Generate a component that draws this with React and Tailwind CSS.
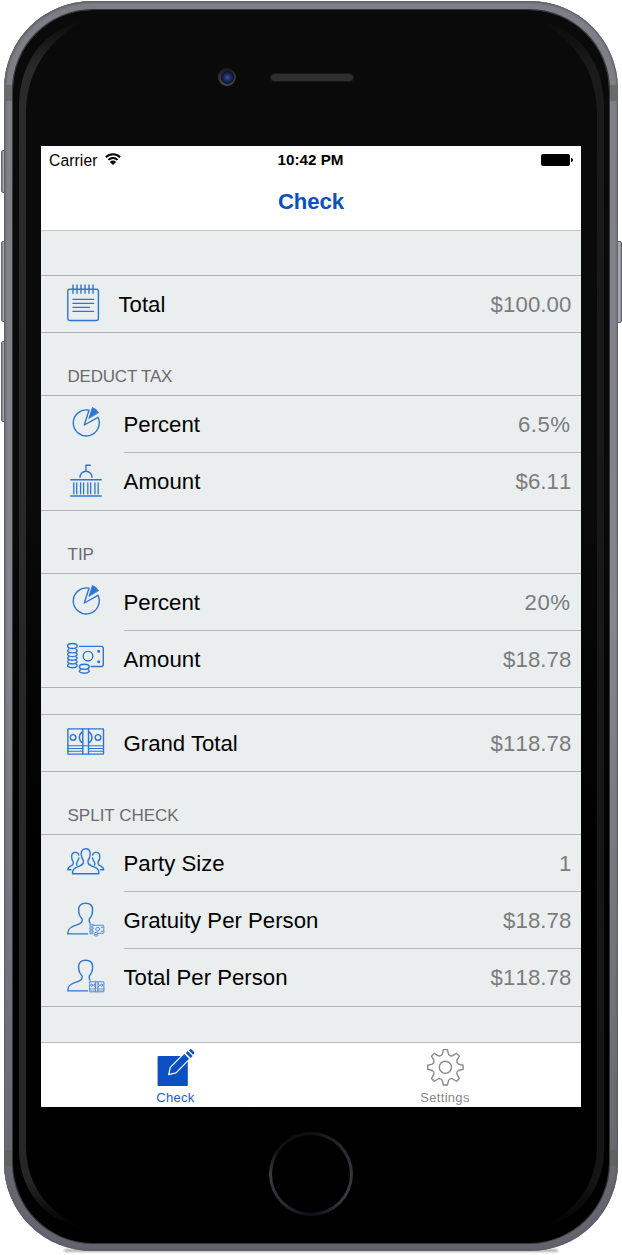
import React from "react";

const line = {
  fill: "none",
  stroke: "currentColor",
  strokeWidth: 1.4,
  strokeLinecap: "round",
  strokeLinejoin: "round",
};

function RowIcon({ children }) {
  return (
    <svg viewBox="0 0 38 56" className="h-[56px] w-[38px] shrink-0 overflow-visible text-[#2f75d3]">
      <g {...line}>{children}</g>
    </svg>
  );
}

function NotepadIcon() {
  return (
    <RowIcon>
      <rect x="0.8" y="13.3" width="30.6" height="31.2" rx="2" />
      <path d="M6 8.9v8.4M10 8.9v8.4M14 8.9v8.4M18 8.9v8.4M22 8.9v8.4M26 8.9v8.4" />
      <path d="M6 23.4h20.6M6 27.4h20.6M6 31.4h16.5M6 35.4h20.6" />
    </RowIcon>
  );
}

function PieIcon() {
  return (
    <RowIcon>
      <path d="M17.3 29L22 14.2A13 13 0 1 0 31 21.3Z" />
      <path d="M21.9 22.2L25.4 11.5Q29.5 13 31.4 16.4Z" fill="currentColor" strokeWidth="0.8" />
    </RowIcon>
  );
}

function BankIcon() {
  return (
    <RowIcon>
      <path d="M13 24.2a6 6 0 0 1 12 0M19 18.2v-6h4.3" />
      <path d="M3.8 26.8h30.4M3.8 43h30.4" strokeWidth="1.5" />
      <path d="M6.8 29.8v11M9.7 29.8v11M13.6 29.8v11M16.6 29.8v11M20.8 29.8v11M23.7 29.8v11M27.9 29.8v11M31.2 29.8v11" strokeWidth="1.3" />
    </RowIcon>
  );
}

function CashDrawing() {
  return (
    <>
      <path d="M12.6 15.4H34.3a2 2 0 0 1 2 2V33.5a2 2 0 0 1-2 2H24.2" />
      <circle cx="21" cy="25.2" r="4.8" />
      <circle cx="31.7" cy="20.3" r="0.8" fill="currentColor" />
      <circle cx="31.7" cy="30.8" r="0.8" fill="currentColor" />
      <ellipse cx="5.4" cy="15" rx="4.7" ry="2.5" />
      <path d="M1.7 18.4c-2.4 1.4-.4 3.5 3.7 3.5s6.1-2.1 3.7-3.5M1.7 22.1c-2.4 1.4-.4 3.5 3.7 3.5s6.1-2.1 3.7-3.5M1.7 25.8c-2.4 1.4-.4 3.5 3.7 3.5s6.1-2.1 3.7-3.5M1.7 29.5c-2.4 1.4-.4 3.5 3.7 3.5s6.1-2.1 3.7-3.5M1.7 33.2c-2.4 1.4-.4 3.5 3.7 3.5s6.1-2.1 3.7-3.5" />
      <ellipse cx="17.3" cy="35.8" rx="4.9" ry="2.5" />
      <path d="M13.4 38.8c-2.4 1.4-.4 3.5 3.9 3.5s6.3-2.1 3.9-3.5" />
    </>
  );
}

function CashIcon() {
  return (
    <RowIcon>
      <CashDrawing />
    </RowIcon>
  );
}

function BillsDrawing() {
  return (
    <>
      <rect x="0.9" y="13.9" width="35.6" height="25.2" rx="0.3" />
      <path d="M15.8 13.9v25.2M21.5 13.9v25.2" />
      <circle cx="6.1" cy="22.4" r="2.8" />
      <circle cx="31" cy="22.4" r="2.8" />
      <path d="M15.2 17.2c-3.800 2.400-3.800 8.200 0 10.400M22.100 17.200c3.800 2.400 3.800 8.200 0 10.400" />
      <path d="M.9 30.800h35.600M.9 33.500h14.900M21.500 33.500h15M.9 36.300h14.900M21.500 36.300h15" strokeWidth="1.1" />
    </>
  );
}

function BillsIcon() {
  return (
    <RowIcon>
      <BillsDrawing />
    </RowIcon>
  );
}

function GroupIcon() {
  return (
    <RowIcon>
      <path d="M18.7 13.8c-3 0-4.5 2-4.5 5 0 3.3 1 5.2 2.2 6.7v1.6c0 2.4-1.6 3-4.8 4.3-3.6 1.4-6 2.6-6 5.6v1.7h26.2v-1.7c0-3-2.4-4.2-6-5.6-3.2-1.3-4.8-1.9-4.8-4.3v-1.6c1.2-1.5 2.2-3.4 2.2-6.7 0-3-1.5-5-4.5-5z" />
      <path d="M11.800 20c-.4-1.600-1.600-2.600-3.500-2.600-2.400 0-3.700 1.600-3.700 4.300 0 2.600.8 4 1.700 5.200v1.600c0 2.900-5.500 2-5.500 6.300h3.200M9.900 30.200c-.9-1.300-.2-2.300.3-3.400q1.500-1.600 1.600-3.800" />
      <path d="M25.600 20c.4-1.600 1.600-2.600 3.500-2.600 2.400 0 3.700 1.600 3.700 4.300 0 2.600-.8 4-1.700 5.200v1.600c0 2.900 5.500 2 5.500 6.300h-3.200M27.500 30.200c.9-1.300.2-2.300-.3-3.400q-1.500-1.600-1.600-3.800" />
    </RowIcon>
  );
}

function PersonOutline() {
  return (
    <path d="M20.500 41.900H.8c0-4.600 1.700-6.200 5.700-7.800 4.300-1.600 8.600-2 8.600-5.300v-1.800c-2.200-2.200-3.500-5.300-3.500-9.200 0-4 2.400-6.500 7-6.500s7 2.500 7 6.500c0 3.900-1.300 7-3.300 9.200v2.400l.6 1.600" />
  );
}

function PersonCashIcon() {
  return (
    <RowIcon>
      <PersonOutline />
      <g transform="translate(22.300 27.100) scale(0.4)" strokeWidth="2.400" opacity="0.85">
        <CashDrawing />
      </g>
    </RowIcon>
  );
}

function PersonBillsIcon() {
  return (
    <RowIcon>
      <PersonOutline />
      <g transform="translate(22.300 27.200) scale(0.4)" strokeWidth="2.400" opacity="0.85">
        <BillsDrawing />
      </g>
    </RowIcon>
  );
}

function Row({ icon, label, value, wide, last, short, labelClass = "" }) {
  const percent = value.endsWith("%");
  return (
    <div className={"flex overflow-visible pl-[26px] " + (short ? "h-[56px]" : "h-[57px]")}>
      {icon}
      <div
        className={
          "relative flex flex-1 items-center justify-between pt-0.5 text-[22.2px] leading-none " +
          (percent ? "pr-[10.5px] " : "pr-[9.5px] ") +
          (wide ? "ml-[13.5px] " : "ml-[18.5px] ")
        }
      >
        <span className={"whitespace-nowrap text-black " + labelClass}>{label}</span>
        <span className={"text-[#7a7c7d] [font-kerning:none] " + (percent ? "tracking-[0.5px]" : "tracking-[0.1px]")}>{value}</span>
        {!last && <i className="absolute inset-x-0 bottom-0 h-px bg-[#b4b7b8]" />}
      </div>
    </div>
  );
}

function Group({ children }) {
  return <div className="border-y border-[#b0b3b4]">{children}</div>;
}

function Heading({ children, className = "" }) {
  return (
    <h2 className={"flex h-[62px] items-end pb-[10px] pl-[26.5px] text-[17px] leading-[17px] text-[#6a6b6f] " + className}>
      {children}
    </h2>
  );
}

function StatusBar() {
  return (
    <div className="grid h-7 grid-cols-3 items-center text-[15.65px] leading-none text-black">
      <div className="flex items-center gap-[7px] pl-2">
        <span className="pt-px tracking-[0.1px]">Carrier</span>
        <svg viewBox="0 0 16 12" className="mb-0.5 h-3 w-4">
          <path d="M0.900 4.200a10.200 10.200 0 0 1 14.200 0M3.400 6.900a6.600 6.600 0 0 1 9.200 0" fill="none" stroke="#000" strokeWidth="1.900" />
          <path d="M8 12L4.900 8.900a4.500 4.500 0 0 1 6.200 0z" />
        </svg>
      </div>
      <div className="whitespace-nowrap pr-px text-center text-[15.2px] font-bold">10:42 PM</div>
      <div className="flex items-center justify-end pr-2">
        <i className="h-3 w-[29px] rounded-[2px] bg-black" />
        <i className="ml-px h-1 w-[2px] rounded-r-full bg-black" />
      </div>
    </div>
  );
}

function ComposeIcon() {
  return (
    <svg viewBox="156 1047 40 40" className="h-10 w-10 text-[#0a50c2]">
      <rect x="157.600" y="1056" width="30.200" height="30" rx="0.800" fill="currentColor" />
      <path d="M168.600 1074.600l1.700-7.300 14-14.200 5.700 5.600-14 14.100z" fill="currentColor" stroke="#fff" strokeWidth="1.200" strokeLinejoin="round" />
      <path d="M185.800 1052.200l3.500-3.300 5 5-3.400 3.500z" fill="#fff" />
      <path d="M185.800 1053l1.900-1.900 4.900 4.900-1.900 1.900zM188.800 1050.200l1.200-.9q.8-.6 1.600.1l2.500 2.500q.7.800 0 1.600l-1 1.200z" fill="currentColor" />
    </svg>
  );
}

/* Eight-tooth outline: a tapered tooth every 45 degrees, joined by concave arcs. */
function gearPath() {
  const tooth = [[-3.200, -13], [-2, -17.700], [2, -17.700], [3.200, -13]];
  let d = "";
  for (let k = 0; k < 8; k++) {
    const a = (k * Math.PI) / 4;
    const pts = tooth.map(
      ([x, y]) => (x * Math.cos(a) - y * Math.sin(a)).toFixed(2) + " " + (x * Math.sin(a) + y * Math.cos(a)).toFixed(2)
    );
    d += (k === 0 ? "M" : "A3.600 3.600 0 0 0 ") + pts[0] + "L" + pts.slice(1).join("L");
  }
  return d + "A3.600 3.600 0 0 0 -3.200 -13Z";
}

function GearIcon() {
  return (
    <svg viewBox="-19.400 -20.300 40 40" className="h-10 w-10 text-[#8a8a8a]">
      <g {...line}>
        <path d={gearPath()} />
        <circle r="6.100" />
      </g>
    </svg>
  );
}

function TabBar() {
  return (
    <nav className="grid h-[65px] grid-cols-2 border-t border-[#b8bcbc] bg-white text-[13px] leading-none tracking-[0.3px]">
      <div className="flex flex-col items-center pt-1 text-[#1a5cc4]">
        <ComposeIcon />
        <span className="mt-1 pr-px">Check</span>
      </div>
      <div className="flex flex-col items-center pt-1 text-[#8a8a8a]">
        <GearIcon />
        <span className="mt-1 pr-0.5">Settings</span>
      </div>
    </nav>
  );
}

function Screen() {
  return (
    <main className="flex h-[961px] w-[540px] flex-col overflow-hidden bg-[#eaeeef]">
      <header className="h-[85px] border-b border-[#c3c7c8] bg-white">
        <StatusBar />
        <h1 className="mt-[17px] text-center text-[22.2px] font-bold leading-[22px] tracking-[-0.1px] text-[#0c50c0]">Check</h1>
      </header>
      <div className="flex-1 pt-11">
        <Group>
          <Row icon={<NotepadIcon />} label="Total" value="$100.00" wide short last />
        </Group>
        <Heading className="tracking-[-0.2px]">DEDUCT TAX</Heading>
        <Group>
          <Row icon={<PieIcon />} label="Percent" value="6.5%" />
          <Row icon={<BankIcon />} label="Amount" value="$6.11" labelClass="tracking-[0.1px]" last />
        </Group>
        <Heading>TIP</Heading>
        <Group>
          <Row icon={<PieIcon />} label="Percent" value="20%" />
          <Row icon={<CashIcon />} label="Amount" value="$18.78" labelClass="tracking-[0.1px]" short last />
        </Group>
        <div className="mt-[26px]">
          <Group>
            <Row icon={<BillsIcon />} label="Grand Total" value="$118.78" short last />
          </Group>
        </div>
        <Heading>SPLIT CHECK</Heading>
        <Group>
          <Row icon={<GroupIcon />} label="Party Size" value="1" />
          <Row icon={<PersonCashIcon />} label="Gratuity Per Person" value="$18.78" />
          <Row icon={<PersonBillsIcon />} label="Total Per Person" value="$118.78" last />
        </Group>
      </div>
      <TabBar />
    </main>
  );
}

function SideButton({ className }) {
  return (
    <i className={"absolute w-[6px] rounded-[2px] border border-[#65656f] bg-linear-to-r from-[#777780] via-[#b9b9c2] to-[#85858e] " + className} />
  );
}

function GlassSheen() {
  return (
    <svg viewBox="0 0 622 1255" className="pointer-events-none absolute inset-0 h-full w-full">
      <defs>
        <linearGradient id="sheenLeft" x1="0" y1="20" x2="0" y2="1230" gradientUnits="userSpaceOnUse">
          <stop offset="0" stopColor="#2c2c2c" stopOpacity="0" />
          <stop offset="0.04" stopColor="#2a2a2a" />
          <stop offset="0.96" stopColor="#262626" />
          <stop offset="1" stopColor="#202020" stopOpacity="0" />
        </linearGradient>
        <linearGradient id="sheenRight" x1="0" y1="20" x2="0" y2="1230" gradientUnits="userSpaceOnUse">
          <stop offset="0" stopColor="#1b1b1b" stopOpacity="0" />
          <stop offset="0.04" stopColor="#1b1b1b" />
          <stop offset="0.96" stopColor="#151515" />
          <stop offset="1" stopColor="#141414" stopOpacity="0" />
        </linearGradient>
      </defs>
      <path d="M82 21C42 31 19 64 19 108V1150C19 1188 43 1220 82 1228C45 1210 26 1184 26 1144V115C26 72 46 43 82 21Z" fill="url(#sheenLeft)" />
      <path d="M541 21C582 31 604 64 604 108V1150C604 1188 580 1220 541 1228C578 1210 597 1184 597 1144V115C597 72 577 43 541 21Z" fill="url(#sheenRight)" />
    </svg>
  );
}

export default function App() {
  return (
    <div className="relative h-[1255px] w-[622px] overflow-hidden bg-white font-['Liberation_Sans',Arial,sans-serif]">
      <SideButton className="left-px top-[150px] h-[43px]" />
      <SideButton className="left-px top-[241px] h-[81px]" />
      <SideButton className="left-px top-[341px] h-[81px]" />
      <SideButton className="left-[616px] top-[241px] h-[82px]" />
      <i className="absolute left-[64px] top-[1249px] h-[3px] w-[494px] rounded-full bg-black/30 blur-[1px]" />
      <div className="relative mx-1 mt-px flex h-[1250px] flex-col rounded-[88px] bg-linear-to-b from-[#777b80] via-[#83838c] to-[#55565e] px-[9px] pb-[8px] pt-[9px] shadow-[inset_0_0_2px_1px_#5a5a62,inset_2px_2px_2px_#75757c,inset_0_0_0_8px_#8d8d9640]">
        <i className="absolute inset-x-0 top-[84px] h-4 bg-[#686b6a]" />
        <i className="absolute inset-x-0 top-[1149px] h-4 bg-[#5f6261]" />
        <div className="relative flex flex-1 flex-col items-center rounded-[80px] bg-linear-to-b from-[#0a0a0a] from-40% to-black shadow-[0_0_0_1px_#35353b]">
          <div className="h-[136px] w-full shrink-0 pb-[2px] pl-[2px]">
            <div className="grid h-full grid-cols-[1fr_84px_1fr] items-center">
              <div className="flex justify-end pr-[34px]">
                <i className="flex size-[18px] items-center justify-center rounded-full bg-linear-to-b from-[#1b1b1b] to-[#494949]">
                  <i className="size-[13px] rounded-full bg-[radial-gradient(circle,#35509f_0%,#1e2c66_35%,#0b0f22_70%)]" />
                </i>
              </div>
              <i className="h-[9px] rounded-full border border-[#171717] bg-[#2e2e2e]" />
            </div>
          </div>
          <Screen />
          <div className="flex flex-1 items-center justify-center pb-[3px]">
            <div className="size-[84px] rounded-full bg-[conic-gradient(#0b1014,#25262c_12%,#35353c_25%,#3a3a42_35%,#0a1016_50%,#2b2b31_62%,#3a3a40_75%,#0c0f12_85%,#0b1014)] p-[3px]">
              <div className="h-full w-full rounded-full bg-black" />
            </div>
          </div>
        </div>
      </div>
      <GlassSheen />
    </div>
  );
}
